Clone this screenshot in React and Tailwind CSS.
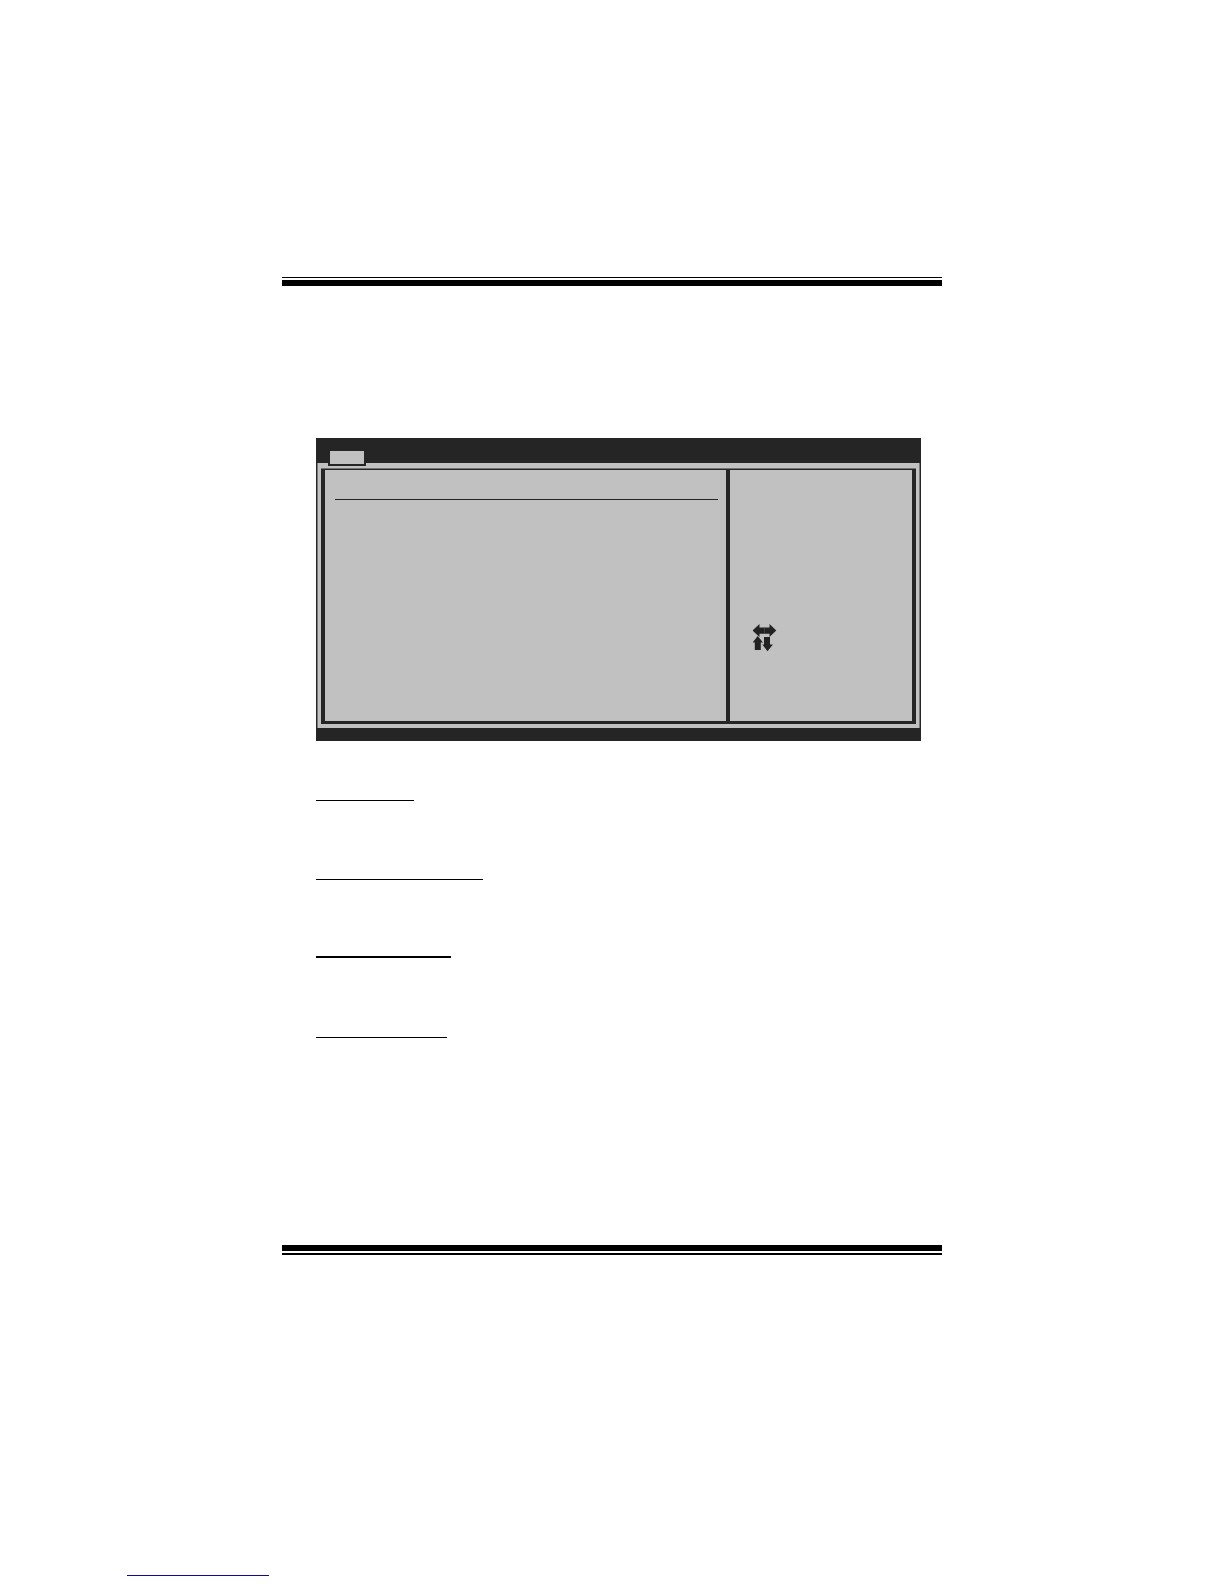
import React from 'react';

const sections = [
  { rule: 'w-[98px] border-t', gap: 'mt-[59px]' },
  { rule: 'w-[167px] border-t', gap: 'mt-[78px]' },
  { rule: 'w-[135px] border-t-2', gap: 'mt-[76px]' },
  { rule: 'w-[131px] border-t', gap: 'mt-[79px]' },
];

const ArrowKeys = () => (
  <svg className="w-6 h-7" viewBox="0 0 24 28" fill="#222222" aria-hidden="true">
    {/* Left / right */}
    <path d="M-0.5 6.5L6.5 0V3.5H16.5V0L23.3 6.5L16.5 13V9.8H6.5V13Z" />
    {/* Up */}
    <path d="M4.7 12L10 18.5H7.8V26H1.8V18.5H-0.5Z" />
    {/* Down */}
    <path d="M11 13H17V20.5H20L14.5 27.3L9.3 20.5H11Z" />
    <path d="M11.5 3.5V9.8" stroke="#555555" strokeWidth="0.6" />
  </svg>
);

const SetupScreen = () => (
  <div className="bg-[#252525]">
    {/* Menu bar */}
    <div className="flex h-[25px] items-end pl-3">
      <button
        type="button"
        aria-label="Menu tab"
        className="relative z-10 -mb-[3px] h-[17px] w-[38px] border-2 border-[#252525] bg-[#c1c1c1]"
      />
    </div>

    {/* Frame */}
    <div className="border-x border-[#252525]">
      <div className="border-x border-[#777777] bg-[#c1c1c1] px-[3px] pt-[5px] pb-1">
        <div className="border-t border-[#737373] bg-[#252525] px-1 pt-px pb-[3px]">
          <div className="flex h-[251px] gap-1">
            <div className="flex-1 bg-[#c1c1c1] pt-[29px] pr-2 pl-[10px]">
              <hr className="border-t border-[#252525]" />
            </div>
            <div className="w-[182px] bg-[#c1c1c1] pt-[154px] pl-[23px]">
              <ArrowKeys />
            </div>
          </div>
        </div>
      </div>
    </div>

    {/* Status bar */}
    <div className="h-[13px]" />
  </div>
);

const App = () => {
  return (
    <div className="bg-white pt-[277px] pb-2 font-['Liberation_Sans',sans-serif]">
      <main className="mx-auto max-w-[660px]">
        <div className="border-t border-black pt-[2px]">
          <div className="h-[6px] bg-black" />
        </div>

        <div className="mt-[152px] mr-[21px] ml-[34px]">
          <SetupScreen />
          {sections.map((section, index) => (
            <hr key={index} className={`border-black ${section.rule} ${section.gap}`} />
          ))}
        </div>

        <div className="mt-[207px] border-b-2 border-black pb-[2px]">
          <div className="h-[6px] bg-black" />
        </div>
      </main>

      <footer className="mt-80 pl-[127px]">
        <hr className="w-[142px] border-t border-[#0c0c8c]" />
      </footer>
    </div>
  );
};

export default App;
